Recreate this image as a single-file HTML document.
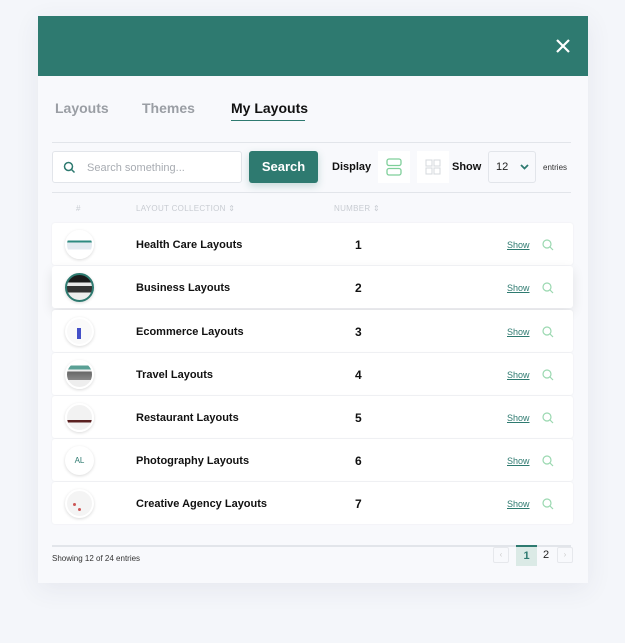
<!DOCTYPE html>
<html><head><style>
*{box-sizing:border-box;margin:0;padding:0}
body{width:625px;height:643px;background:#f4f6fa;font-family:"Liberation Sans",sans-serif;position:relative;overflow:hidden}
.card{position:absolute;left:38px;top:16px;width:550px;height:567px;background:#f8f9fc;box-shadow:0 6px 24px rgba(60,70,100,.08)}
.hdr{height:60px;background:#2e7a70;position:relative}
.x{position:absolute;right:17px;top:22px;width:16px;height:16px}
.a{position:absolute}
.tab{font-size:14px;font-weight:bold;color:#9a9ea4;top:84px}
.line{height:1px;background:#e2e5ea;left:14px;width:519px}
.row{left:14px;width:521px;height:42px;background:#fff;border-radius:3px;box-shadow:0 0 2px rgba(0,0,0,.06)}
.row .av{position:absolute;left:13px;top:7px;width:29px;height:29px;border-radius:50%;background:#eef0f3;box-shadow:0 1px 3px rgba(0,0,0,.15);border:2px solid #fff}
.row .nm{position:absolute;left:84px;top:16px;font-size:11px;font-weight:bold;color:#111}
.row .nb{position:absolute;left:303px;top:15px;font-size:12px;font-weight:bold;color:#111}
.row .sh{position:absolute;left:455px;top:17px;font-size:9px;color:#2e7a70;text-decoration:underline}
.row svg{position:absolute;left:490px;top:16px}
.th{font-size:8px;color:#c8ccd2;top:188px;letter-spacing:.3px}
</style></head><body>
<div class="card">
<div class="hdr"><svg class="x" viewBox="0 0 16 16"><path d="M2 2L14 14M14 2L2 14" stroke="#fff" stroke-width="2.2"/></svg></div>
<div class="a tab" style="left:17px">Layouts</div>
<div class="a tab" style="left:104px">Themes</div>
<div class="a tab" style="left:193px;color:#111">My Layouts</div>
<div class="a" style="left:193px;top:104px;width:74px;height:1px;background:#2e7a70"></div>
<div class="a line" style="top:126px"></div>
<div class="a" style="left:14px;top:135px;width:190px;height:32px;background:#fff;border:1px solid #e2e5ea;border-radius:3px">
<svg class="a" style="left:10px;top:9px" width="13" height="13" viewBox="0 0 13 13"><circle cx="5.5" cy="5.5" r="4" fill="none" stroke="#2e7a70" stroke-width="1.5"/><path d="M8.5 8.5L11.5 11.5" stroke="#2e7a70" stroke-width="1.5"/></svg>
<span class="a" style="left:34px;top:10px;font-size:11px;color:#a8acb2">Search something...</span></div>
<div class="a" style="left:211px;top:135px;width:69px;height:32px;background:#2e7a70;border-radius:3px;color:#fff;font-size:13px;font-weight:bold;text-align:center;line-height:32px;box-shadow:0 3px 8px rgba(46,122,112,.25)">Search</div>
<div class="a" style="left:294px;top:145px;font-size:11px;font-weight:bold;color:#111">Display</div>
<div class="a" style="left:340px;top:135px;width:32px;height:32px;background:#fff"><svg class="a" style="left:8px;top:7px" width="16" height="18" viewBox="0 0 16 18"><rect x="1" y="1" width="14" height="6.5" rx="2" fill="none" stroke="#7fcf9a" stroke-width="1.3"/><rect x="1" y="10.5" width="14" height="6.5" rx="2" fill="none" stroke="#7fcf9a" stroke-width="1.3"/></svg></div>
<div class="a" style="left:379px;top:135px;width:32px;height:32px;background:#fff"><svg class="a" style="left:8px;top:8px" width="16" height="16" viewBox="0 0 16 16" fill="none" stroke="#d4d8dd" stroke-width="1"><rect x="1" y="1" width="6" height="6"/><rect x="9" y="1" width="6" height="6"/><rect x="1" y="9" width="6" height="6"/><rect x="9" y="9" width="6" height="6"/></svg></div>
<div class="a" style="left:414px;top:145px;font-size:11px;font-weight:bold;color:#111">Show</div>
<div class="a" style="left:450px;top:135px;width:48px;height:32px;border:1px solid #e2e5ea;border-radius:3px;background:#f8f9fc"><span class="a" style="left:7px;top:9px;font-size:11px;color:#222">12</span><svg class="a" style="left:31px;top:12px" width="9" height="6" viewBox="0 0 9 6"><path d="M1 1L4.5 4.5L8 1" fill="none" stroke="#2e7a70" stroke-width="1.8"/></svg></div>
<div class="a" style="left:505px;top:147px;font-size:8px;color:#333">entries</div>
<div class="a line" style="top:176px"></div>
<div class="a th" style="left:38px">#</div>
<div class="a th" style="left:98px">LAYOUT COLLECTION ⇕</div>
<div class="a th" style="left:296px">NUMBER ⇕</div>

<div class="a row" style="top:207px"><div class="av" style="background:linear-gradient(#fff 35%,#2e8a80 35%,#2e8a80 42%,#e4eaf0 42%,#e4eaf0 70%,#fff 70%)"></div><div class="nm">Health Care Layouts</div><div class="nb">1</div><div class="sh">Show</div><svg width="12" height="12" viewBox="0 0 12 12"><circle cx="5" cy="5" r="4" fill="none" stroke="#9ad8b0" stroke-width="1.2"/><path d="M8 8L11 11" stroke="#9ad8b0" stroke-width="1.2"/></svg></div>
<div class="a row" style="top:250px;box-shadow:0 4px 12px rgba(0,0,0,.09)"><div class="av" style="background:linear-gradient(#1a1a1a 30%,#e8e8e8 30%,#e8e8e8 45%,#333 45%,#333 70%,#eee 70%);border-color:#2e7a70"></div><div class="nm">Business Layouts</div><div class="nb">2</div><div class="sh">Show</div><svg width="12" height="12" viewBox="0 0 12 12"><circle cx="5" cy="5" r="4" fill="none" stroke="#9ad8b0" stroke-width="1.2"/><path d="M8 8L11 11" stroke="#9ad8b0" stroke-width="1.2"/></svg></div>
<div class="a row" style="top:294px"><div class="av" style="background:#fafafa"><div class="a" style="left:10px;top:9px;width:4px;height:11px;background:#4450c8"></div></div><div class="nm">Ecommerce Layouts</div><div class="nb">3</div><div class="sh">Show</div><svg width="12" height="12" viewBox="0 0 12 12"><circle cx="5" cy="5" r="4" fill="none" stroke="#9ad8b0" stroke-width="1.2"/><path d="M8 8L11 11" stroke="#9ad8b0" stroke-width="1.2"/></svg></div>
<div class="a row" style="top:337px"><div class="av" style="background:linear-gradient(#fff 15%,#5aa095 15%,#5aa095 30%,#eee 30%,#eee 38%,#666 38%,#888 72%,#eee 72%)"></div><div class="nm">Travel Layouts</div><div class="nb">4</div><div class="sh">Show</div><svg width="12" height="12" viewBox="0 0 12 12"><circle cx="5" cy="5" r="4" fill="none" stroke="#9ad8b0" stroke-width="1.2"/><path d="M8 8L11 11" stroke="#9ad8b0" stroke-width="1.2"/></svg></div>
<div class="a row" style="top:380px"><div class="av" style="background:linear-gradient(#f2f2f2 60%,#5a2020 60%,#5a2020 70%,#f2f2f2 70%)"></div><div class="nm">Restaurant Layouts</div><div class="nb">5</div><div class="sh">Show</div><svg width="12" height="12" viewBox="0 0 12 12"><circle cx="5" cy="5" r="4" fill="none" stroke="#9ad8b0" stroke-width="1.2"/><path d="M8 8L11 11" stroke="#9ad8b0" stroke-width="1.2"/></svg></div>
<div class="a row" style="top:423px"><div class="av" style="background:#fff;font-size:8px;color:#2e7a70;text-align:center;line-height:25px">AL</div><div class="nm">Photography Layouts</div><div class="nb">6</div><div class="sh">Show</div><svg width="12" height="12" viewBox="0 0 12 12"><circle cx="5" cy="5" r="4" fill="none" stroke="#9ad8b0" stroke-width="1.2"/><path d="M8 8L11 11" stroke="#9ad8b0" stroke-width="1.2"/></svg></div>
<div class="a row" style="top:466px"><div class="av" style="background:#f4f4f4"><div class="a" style="left:6px;top:12px;width:3px;height:3px;border-radius:50%;background:#c55"></div><div class="a" style="left:11px;top:17px;width:3px;height:3px;border-radius:50%;background:#c55"></div></div><div class="nm">Creative Agency Layouts</div><div class="nb">7</div><div class="sh">Show</div><svg width="12" height="12" viewBox="0 0 12 12"><circle cx="5" cy="5" r="4" fill="none" stroke="#9ad8b0" stroke-width="1.2"/><path d="M8 8L11 11" stroke="#9ad8b0" stroke-width="1.2"/></svg></div>

<div class="a line" style="top:529px;height:2px"></div>
<div class="a" style="left:14px;top:538px;font-size:8px;color:#333">Showing 12 of 24 entries</div>
<div class="a" style="left:455px;top:531px;width:16px;height:16px;border:1px solid #e6e8ec;border-radius:2px;font-size:8px;color:#ccc;text-align:center;line-height:14px">‹</div>
<div class="a" style="left:478px;top:529px;width:21px;height:21px;background:#dbeae6;border-top:2px solid #2e7a70;font-size:11px;font-weight:bold;color:#2e7a70;text-align:center;line-height:19px">1</div>
<div class="a" style="left:505px;top:533px;font-size:11px;color:#222">2</div>
<div class="a" style="left:519px;top:531px;width:16px;height:16px;border:1px solid #e6e8ec;border-radius:2px;font-size:8px;color:#ccc;text-align:center;line-height:14px">›</div>
</div>
</body></html>
